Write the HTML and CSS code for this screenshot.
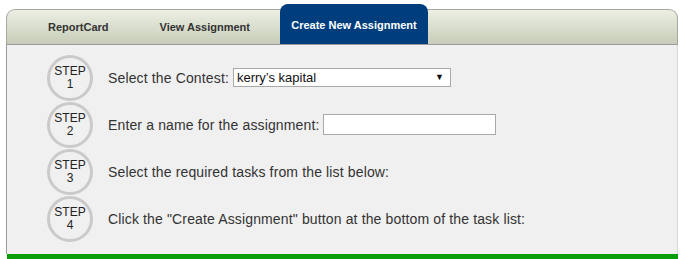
FILE: index.html
```html
<!DOCTYPE html>
<html lang="en">
<head>
  <meta charset="UTF-8">
  <title>Create New Assignment</title>
  <link rel="stylesheet" href="styles.css">
</head>
<body>
  <div class="panel">
    <div class="tabbar">
      <a class="tab tab-report">ReportCard</a>
      <a class="tab tab-view">View Assignment</a>
      <a class="tab tab-create active">Create New Assignment</a>
    </div>

    <div class="content">
      <div class="step">
        <div class="step-badge">STEP<br>1</div>
        <label class="step-text">Select the Contest:
          <span class="select-wrap">
            <select class="contest">
              <option>kerry’s kapital</option>
            </select>
            <span class="arrow">&#9660;</span>
          </span>
        </label>
      </div>
      <div class="step">
        <div class="step-badge">STEP<br>2</div>
        <label class="step-text">Enter a name for the assignment:
          <input type="text" class="name-input">
        </label>
      </div>
      <div class="step">
        <div class="step-badge">STEP<br>3</div>
        <span class="step-text">Select the required tasks from the list below:</span>
      </div>
      <div class="step">
        <div class="step-badge">STEP<br>4</div>
        <span class="step-text">Click the "Create Assignment" button at the bottom of the task list:</span>
      </div>
    </div>

    <div class="green-bar"></div>
  </div>
</body>
</html>
```

FILE: styles.css
```css
body {
  margin: 0;
  padding: 0;
  background: #fff;
  font-family: "Liberation Sans", Arial, sans-serif;
  color: #333;
}

.panel {
  width: 672px;
  margin-left: 6px;
  padding-top: 4px;
}

/* tabs */
.tabbar {
  display: flex;
  height: 34px;
  margin-top: 5px;
  background: linear-gradient(#ecefe3, #c7cdb9);
  border: 1px solid #a4a89c;
  border-bottom-color: #9a9a9a;
  border-radius: 9px 9px 0 0;
}

.tab {
  display: flex;
  align-items: center;
  padding: 0 11px;
  font-size: 11px;
  font-weight: bold;
  color: #333;
  white-space: nowrap;
  cursor: pointer;
}

.tab-report {
  margin-left: 30px;
}

.tab-view {
  margin-left: 29px;
}

.tab-create {
  margin-left: 19px;
}

.tab.active {
  margin-top: -6px;
  height: 40px;
  padding: 1px 0 0;
  box-sizing: border-box;
  width: 148px;
  justify-content: center;
  background: #003d7d;
  color: #fff;
  border-radius: 8px 8px 0 0;
}

/* steps */
.content {
  height: 200px;
  padding: 9px 0 0 40px;
  background: #f0f0f0;
  border-left: 1px solid #999;
  border-right: 1px solid #d8d8d8;
}

.step {
  display: flex;
  align-items: center;
  height: 47px;
}

.step-badge {
  width: 40px;
  height: 40px;
  border: 3px solid #cacaca;
  border-radius: 50%;
  display: flex;
  align-items: center;
  justify-content: center;
  text-align: center;
  font-size: 12px;
  line-height: 13px;
  color: #222;
  flex-shrink: 0;
}

.step-text {
  margin-left: 15px;
  font-size: 14px;
  letter-spacing: 0.14px;
  color: #333;
  display: flex;
  align-items: center;
  gap: 4px;
}

.select-wrap {
  position: relative;
  display: inline-block;
}

.contest {
  appearance: none;
  width: 218px;
  height: 19px;
  padding: 0 0 0 3px;
  border: 1px solid #a9a9a9;
  border-radius: 0;
  background: #fff;
  font-family: "Liberation Sans", Arial, sans-serif;
  font-size: 13px;
  color: #111;
}

.arrow {
  position: absolute;
  right: 7px;
  top: 4px;
  font-size: 9px;
  color: #111;
  pointer-events: none;
}

.name-input {
  width: 173px;
  height: 21px;
  box-sizing: border-box;
  border: 1px solid #a9a9a9;
  background: #fff;
  padding: 0 3px;
}

.green-bar {
  height: 6px;
  background: #0a9d0a;
  margin-left: 1px;
}
```
